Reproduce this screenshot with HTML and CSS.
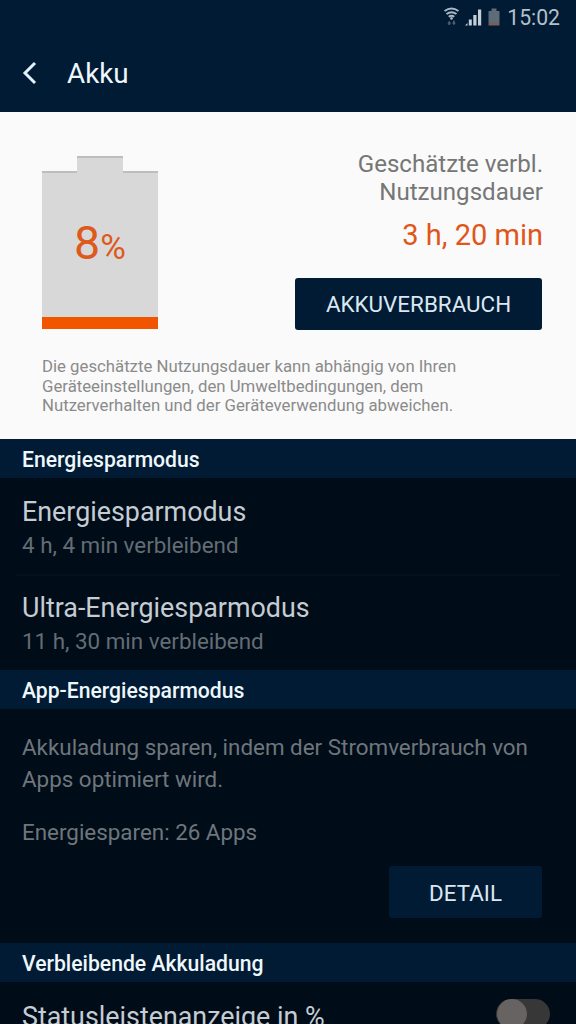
FILE: index.html
```html
<!DOCTYPE html>
<html lang="de">
<head>
    <meta charset="UTF-8">
    <meta name="viewport" content="width=device-width, initial-scale=1.0">
    <title>Akku</title>
    <link rel="stylesheet" href="styles.css">
</head>
<body>
    <div class="screen">
      <div class="status-bar">
        <svg class="status-icons" width="58" height="22" viewBox="0 0 58 22">
          <g fill="none" stroke="#aab8c6" stroke-width="2">
            <path d="M0.5 4 Q7.5 -0.8 14.5 4" />
            <path d="M2.5 7 Q7.5 3.4 12.5 7" />
            <path d="M4.7 9.8 Q7.5 7.8 10.3 9.8" />
          </g>
          <circle cx="7.5" cy="11.4" r="1.3" fill="#aab8c6" />
          <path d="M3.3 16.5 L5.3 13.8 L7.3 16.5 H6.2 V18 H4.4 V16.5 Z M7.9 15.8 H9 V13.8 H10.8 V15.8 H11.9 L9.9 18.3 Z" fill="#4d6071" />
          <g fill="#c3ced9">
            <path d="M21 18.5 L23.5 16 V18.5 Z" />
            <rect x="24.8" y="12.5" width="3" height="6" />
            <rect x="29.3" y="8" width="3.2" height="10.5" />
            <rect x="34" y="2.5" width="3.2" height="16" />
          </g>
          <path d="M44.5 4 H47.5 V1.5 H52.5 V4 H55.5 V15 H44.5 Z" fill="#5e6b78" />
          <rect x="44.5" y="15" width="11" height="3.5" fill="#74605c" />
        </svg>
        <span class="clock">15:02</span>
      </div>
      <div class="title-bar">
        <svg class="back" width="16" height="24" viewBox="0 0 16 24">
          <path d="M14 2 L4 12 L14 22" fill="none" stroke="#e4f0fa" stroke-width="3" />
        </svg>
        <h1>Akku</h1>
      </div>

      <div class="summary">
        <div class="summary-top">
          <div class="battery">
            <div class="battery-cap"></div>
            <div class="battery-body">
              <div class="percent">8<span>%</span></div>
              <div class="level"></div>
            </div>
          </div>
          <div class="estimate">
            <div class="estimate-label">Geschätzte verbl.<br>Nutzungsdauer</div>
            <div class="estimate-time">3 h, 20 min</div>
            <button class="btn btn-usage">AKKUVERBRAUCH</button>
          </div>
        </div>
        <p class="note">Die geschätzte Nutzungsdauer kann abhängig von Ihren<br>Geräteeinstellungen, den Umweltbedingungen, dem<br>Nutzerverhalten und der Geräteverwendung abweichen.</p>
      </div>

      <h2>Energiesparmodus</h2>
      <div class="item">
        <div class="item-title">Energiesparmodus</div>
        <div class="item-sub">4 h, 4 min verbleibend</div>
      </div>
      <div class="item">
        <div class="item-title">Ultra-Energiesparmodus</div>
        <div class="item-sub">11 h, 30 min verbleibend</div>
      </div>

      <h2>App-Energiesparmodus</h2>
      <div class="apps">
        <p>Akkuladung sparen, indem der Stromverbrauch von<br>Apps optimiert wird.</p>
        <p>Energiesparen: 26 Apps</p>
        <button class="btn btn-detail">DETAIL</button>
      </div>

      <h2>Verbleibende Akkuladung</h2>
      <div class="item item-switch">
        <div class="item-title">Statusleistenanzeige in %</div>
        <div class="switch"><div class="knob"></div></div>
      </div>
    </div>
</body>
</html>
```
FILE: styles.css
```css
* {
  box-sizing: border-box;
}
body {
  margin: 0;
  background-color: #000c18;
  font-family: Roboto, "Liberation Sans", sans-serif;
}
h1, h2, p {
  margin: 0;
}
.screen {
  width: 576px;
  height: 1024px;
  overflow: hidden;
}
.status-bar {
  height: 36px;
  background-color: #001b33;
  display: flex;
  align-items: center;
  justify-content: flex-end;
  padding-right: 16px;
  gap: 5px;
}
.clock {
  font-size: 21.2px;
  line-height: 36px;
  color: #b4c0cc;
}
.title-bar {
  height: 76px;
  padding: 0 0 2px 21px;
  background-color: #001b33;
  display: flex;
  align-items: center;
}
h1 {
  margin-left: 30px;
  font-size: 27.8px;
  font-weight: 400;
  color: #eef7fc;
}
.summary {
  height: 327px;
  padding: 44px 33px 0 42px;
  background-color: #fafafa;
}
.summary-top {
  height: 201px;
  display: flex;
  justify-content: space-between;
}
.battery {
  width: 116px;
}
.battery-cap {
  width: 46px;
  height: 15px;
  margin: 0 auto;
  background-color: #d8d8d8;
  border-top: 2px solid #bdbdbd;
}
.battery-body {
  height: 158px;
  display: flex;
  flex-direction: column;
  justify-content: space-between;
  /* shadow line on both shoulders, left open below the cap */
  background: linear-gradient(90deg, #bdbdbd 35px, #d8d8d8 35px, #d8d8d8 81px, #bdbdbd 81px) top / 100% 2px no-repeat #d8d8d8;
}
.percent {
  padding-top: 45px;
  font-size: 46.5px;
  line-height: 54px;
  text-align: center;
  color: #dd5a1c;
}
.percent span {
  font-size: 35px;
}
.level {
  height: 12px;
  background-color: #f25500;
}
.estimate {
  display: flex;
  flex-direction: column;
  align-items: flex-end;
  text-align: right;
}
.estimate-label {
  margin-top: -6px;
  font-size: 24.1px;
  line-height: 28px;
  color: #767676;
}
.estimate-time {
  margin-top: 12px;
  font-size: 29px;
  line-height: 34px;
  color: #e0561a;
}
.btn {
  padding: 0;
  border: none;
  border-radius: 3px;
  background-color: #001b33;
  color: #dbe7f1;
  font-family: inherit;
  font-size: 22.4px;
}
.btn-usage {
  width: 247px;
  height: 52px;
  margin-top: 26px;
  margin-right: 1px;
}
.note {
  font-size: 16.75px;
  line-height: 19.5px;
  color: #8b8b8b;
}
h2 {
  height: 39px;
  padding-left: 22px;
  background-color: #001b33;
  font-size: 21.15px;
  line-height: 41px;
  font-weight: 500;
  color: #eef7fc;
}
.item {
  height: 96px;
  padding: 17px 22px 0;
}
.item + .item {
  background: linear-gradient(#03101f, #03101f) center top / 544px 2px no-repeat;
}
.item-title {
  font-size: 26.85px;
  line-height: 35px;
  color: #c5ccd3;
}
.item-sub {
  font-size: 22.4px;
  line-height: 31px;
  color: #646c74;
}
.apps {
  height: 234px;
  padding: 22px 34px 0 22px;
  display: flex;
  flex-direction: column;
}
.apps p {
  font-size: 22.4px;
  line-height: 32px;
  color: #6e767c;
}
.apps p + p {
  margin-top: 21px;
}
.btn-detail {
  width: 153px;
  height: 52px;
  margin-top: 18px;
  padding-top: 2px;
  align-self: flex-end;
}
.item-switch {
  display: flex;
  justify-content: space-between;
  padding-right: 26px;
}
.item-switch .item-title {
  line-height: 37px;
}
.switch {
  width: 54px;
  height: 30px;
  border-radius: 15px;
  background-color: #373737;
}
.knob {
  width: 30px;
  height: 30px;
  margin-left: 1px;
  border-radius: 50%;
  background-color: #686363;
}
```
